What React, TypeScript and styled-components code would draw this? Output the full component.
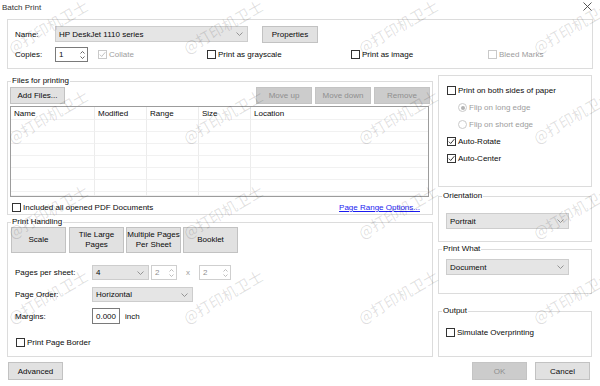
import React from "react";
import styled, { createGlobalStyle } from "styled-components";

const GlobalStyle = createGlobalStyle`
  html, body {
    margin: 0;
    padding: 0;
    background: #fff;
  }
`;

const Window = styled.div`
  position: relative;
  width: 600px;
  height: 386px;
  overflow: hidden;
  background: #fff;
  color: #0a0a0a;
  font-family: "Liberation Sans", Arial, sans-serif;
  font-size: 8px;
  line-height: 9px;
`;

const TitleBar = styled.div`
  box-sizing: border-box;
  height: 19px;
  display: flex;
  justify-content: space-between;
  align-items: flex-start;
  padding: 3px 8px 0 2px;
  color: #333;

  svg {
    margin-top: -1px;
  }
`;

const Body = styled.div`
  padding: 0 7px;
`;

const Box = styled.div<{ $h: number; $pad?: string }>`
  box-sizing: border-box;
  height: ${(p) => p.$h}px;
  border: 1px solid #dcdcdc;
  padding: ${(p) => p.$pad ?? "0"};
  display: flex;
  flex-direction: column;
`;

const Caption = styled.div<{ $mt?: number }>`
  position: relative;
  z-index: 1;
  align-self: flex-start;
  height: 10px;
  line-height: 10px;
  margin: ${(p) => p.$mt ?? 0}px 0 -5px 4px;
  padding: 0 1px;
  background: #fff;
`;

const Row = styled.div<{ $h: number; $mt?: number; $pl?: number; $pr?: number }>`
  display: flex;
  align-items: center;
  height: ${(p) => p.$h}px;
  margin-top: ${(p) => p.$mt ?? 0}px;
  padding-left: ${(p) => p.$pl ?? 0}px;
  padding-right: ${(p) => p.$pr ?? 0}px;
`;

const Label = styled.span<{ $w?: number; $muted?: boolean; $ml?: number }>`
  flex: none;
  width: ${(p) => (p.$w ? `${p.$w}px` : "auto")};
  margin-left: ${(p) => p.$ml ?? 0}px;
  color: ${(p) => (p.$muted ? "#9d9d9d" : "inherit")};
  white-space: nowrap;
`;

const Times = styled(Label)`
  text-align: center;
`;

const Cell = styled.div<{ $w: number; $ml?: number }>`
  flex: none;
  width: ${(p) => p.$w}px;
  margin-left: ${(p) => p.$ml ?? 0}px;
  display: flex;
  align-items: center;
`;

const Button = styled.button<{ $w: number; $h?: number; $off?: boolean; $ml?: number }>`
  box-sizing: border-box;
  flex: none;
  width: ${(p) => p.$w}px;
  height: ${(p) => p.$h ?? 17}px;
  margin: 0 0 0 ${(p) => p.$ml ?? 0}px;
  padding: 0;
  font: inherit;
  line-height: 9px;
  white-space: nowrap;
  background: ${(p) => (p.$off ? "#cccccc" : "#e1e1e1")};
  border: 1px solid ${(p) => (p.$off ? "#c4c4c4" : "#c2c2c2")};
  color: ${(p) => (p.$off ? "#8f8f8f" : "#0a0a0a")};
`;

const ModeButton = styled(Button)`
  line-height: 10px;
`;

const Combo = styled.div<{ $w: number; $h?: number; $ml?: number }>`
  box-sizing: border-box;
  flex: none;
  width: ${(p) => p.$w}px;
  height: ${(p) => p.$h ?? 16}px;
  margin-left: ${(p) => p.$ml ?? 0}px;
  display: flex;
  align-items: center;
  justify-content: space-between;
  padding: 0 4px 0 3px;
  background: #e5e5e5;
  border: 1px solid #cdcdcd;
`;

const Field = styled.div<{ $w: number; $h?: number; $off?: boolean; $ml?: number }>`
  box-sizing: border-box;
  flex: none;
  width: ${(p) => p.$w}px;
  height: ${(p) => p.$h ?? 15}px;
  margin-left: ${(p) => p.$ml ?? 0}px;
  display: flex;
  align-items: center;
  justify-content: space-between;
  padding: 0 2px 0 3px;
  background: #fff;
  border: 1px solid ${(p) => (p.$off ? "#cfcfcf" : "#7a7a7a")};
  color: ${(p) => (p.$off ? "#8f8f8f" : "#0a0a0a")};
`;

const Arrows = styled.span`
  display: flex;
  flex-direction: column;
  gap: 2px;
`;

const CheckLine = styled.label<{ $off?: boolean; $ml?: number }>`
  display: flex;
  align-items: center;
  gap: 2px;
  margin-left: ${(p) => p.$ml ?? 0}px;
  color: ${(p) => (p.$off ? "#9d9d9d" : "inherit")};
  white-space: nowrap;
`;

const Square = styled.span<{ $off?: boolean }>`
  box-sizing: border-box;
  flex: none;
  width: 9px;
  height: 9px;
  display: flex;
  align-items: center;
  justify-content: center;
  background: #fff;
  border: 1px solid ${(p) => (p.$off ? "#c9c9c9" : "#333")};
`;

const Round = styled.span<{ $on?: boolean }>`
  box-sizing: border-box;
  flex: none;
  width: 9px;
  height: 9px;
  border-radius: 50%;
  display: flex;
  align-items: center;
  justify-content: center;
  border: 1px solid #cacaca;

  &::after {
    content: "";
    width: 4px;
    height: 4px;
    border-radius: 50%;
    background: ${(p) => (p.$on ? "#b3b3b3" : "transparent")};
  }
`;

const LinkText = styled.span`
  margin-left: auto;
  color: #1b1bf0;
  text-decoration: underline;
`;

const Main = styled.div`
  display: flex;
  gap: 5px;
`;

const Column = styled.div<{ $w: number; $pt: number }>`
  width: ${(p) => p.$w}px;
  padding-top: ${(p) => p.$pt}px;
  display: flex;
  flex-direction: column;
`;

const Table = styled.div`
  box-sizing: border-box;
  height: 91px;
  margin-top: 2px;
  border: 1px solid #9c9c9c;
  display: grid;
  grid-template-columns: 84px 52px 52px 52px 1fr;
  grid-template-rows: 13px repeat(6, 12px) 1fr;
  overflow: hidden;
`;

const TCell = styled.div`
  border-right: 1px solid #ececec;
  border-bottom: 1px solid #f1f1f1;
  padding-left: 3px;
  display: flex;
  align-items: center;

  &:nth-child(5n) {
    border-right: none;
  }
`;

const Footer = styled.div`
  display: flex;
  align-items: center;
  padding: 5px 3px 0 1px;
`;

const Watermarks = styled.div`
  position: absolute;
  z-index: 2;
  top: 0;
  left: 13px;
  pointer-events: none;
  display: grid;
  grid-template-columns: repeat(4, 175px);
  grid-template-rows: 55px 90px 95px 85px;
`;

const Mark = styled.span`
  align-self: end;
  justify-self: start;
  transform: rotate(-30deg);
  transform-origin: 0 100%;
  font-family: "Noto Sans CJK SC", sans-serif;
  font-size: 15px;
  line-height: 15px;
  color: rgba(0, 0, 0, 0.12);
  white-space: nowrap;
`;

const Chevron = () => (
  <svg width="7" height="4" viewBox="0 0 7 4">
    <path d="M0.5 0.5 L3.5 3.5 L6.5 0.5" fill="none" stroke="#8a8a8a" strokeWidth="0.9" />
  </svg>
);

const SpinArrows = ({ off }: { off?: boolean }) => {
  const c = off ? "#b5b5b5" : "#555";
  return (
    <Arrows>
      <svg width="5" height="3" viewBox="0 0 5 3">
        <path d="M0.5 2.5 L2.5 0.5 L4.5 2.5" fill="none" stroke={c} strokeWidth="0.9" />
      </svg>
      <svg width="5" height="3" viewBox="0 0 5 3">
        <path d="M0.5 0.5 L2.5 2.5 L4.5 0.5" fill="none" stroke={c} strokeWidth="0.9" />
      </svg>
    </Arrows>
  );
};

type CheckProps = { label: string; checked?: boolean; off?: boolean; ml?: number };

const Check = ({ label, checked, off, ml }: CheckProps) => (
  <CheckLine $off={off} $ml={ml}>
    <Square $off={off}>
      {checked && (
        <svg width="7" height="7" viewBox="0 0 7 7">
          <path
            d="M0.8 3.6 L2.7 5.5 L6.3 1.2"
            fill="none"
            stroke={off ? "#bbb" : "#222"}
            strokeWidth="0.9"
          />
        </svg>
      )}
    </Square>
    {label}
  </CheckLine>
);

const Radio = ({ label, on }: { label: string; on?: boolean }) => (
  <CheckLine $off $ml={11}>
    <Round $on={on} />
    {label}
  </CheckLine>
);

const columns = ["Name", "Modified", "Range", "Size", "Location"];

export default function App(): React.ReactElement {
  const marks = Array.from({ length: 16 });

  return (
    <>
      <GlobalStyle />
      <Window>
        <TitleBar>
          <span>Batch Print</span>
          <svg width="9" height="9" viewBox="0 0 9 9">
            <path d="M0.5 0.5 L8.5 8.5 M8.5 0.5 L0.5 8.5" stroke="#444" strokeWidth="0.9" />
          </svg>
        </TitleBar>

        <Body>
          <Box $h={50} $pad="6px 0 0 7px">
            <Row $h={16}>
              <Label $w={40}>Name:</Label>
              <Combo $w={193}>
                <span>HP DeskJet 1110 series</span>
                <Chevron />
              </Combo>
              <Button $w={56} $h={17} $ml={14}>
                Properties
              </Button>
            </Row>
            <Row $h={15} $mt={5}>
              <Label $w={40}>Copies:</Label>
              <Field $w={33}>
                <span>1</span>
                <SpinArrows />
              </Field>
              <Cell $w={109} $ml={10}>
                <Check label="Collate" checked off />
              </Cell>
              <Cell $w={144}>
                <Check label="Print as grayscale" />
              </Cell>
              <Cell $w={137}>
                <Check label="Print as image" />
              </Cell>
              <Cell $w={90}>
                <Check label="Bleed Marks" off />
              </Cell>
            </Row>
          </Box>

          <Main>
            <Column $w={426} $pt={7}>
              <Caption>Files for printing</Caption>
              <Box $h={134} $pad="5px 3px 0 2px">
                <Row $h={17}>
                  <Button $w={55}>Add Files...</Button>
                  <Button $w={56} $off $ml={191}>
                    Move up
                  </Button>
                  <Button $w={56} $off $ml={3}>
                    Move down
                  </Button>
                  <Button $w={56} $off $ml={3}>
                    Remove
                  </Button>
                </Row>
                <Table>
                  {columns.map((c) => (
                    <TCell key={c}>{c}</TCell>
                  ))}
                  {Array.from({ length: 35 }).map((_, i) => (
                    <TCell key={i} />
                  ))}
                </Table>
                <Row $h={13} $mt={4} $pl={2} $pr={9}>
                  <Check label="Included all opened PDF Documents" />
                  <LinkText>Page Range Options...</LinkText>
                </Row>
              </Box>

              <Caption $mt={2}>Print Handling</Caption>
              <Box $h={135} $pad="4px 0 0 3px">
                <Row $h={26}>
                  <ModeButton $w={55} $h={26}>
                    Scale
                  </ModeButton>
                  <ModeButton $w={55} $h={26} $ml={3}>
                    Tile Large
                    <br />
                    Pages
                  </ModeButton>
                  <ModeButton $w={55} $h={26} $ml={2}>
                    Multiple Pages
                    <br />
                    Per Sheet
                  </ModeButton>
                  <ModeButton $w={55} $h={26} $ml={2}>
                    Booklet
                  </ModeButton>
                </Row>
                <Row $h={15} $mt={12} $pl={4}>
                  <Label $w={77}>Pages per sheet:</Label>
                  <Combo $w={57} $h={15}>
                    <span>4</span>
                    <Chevron />
                  </Combo>
                  <Field $w={26} $off $ml={2}>
                    <span>2</span>
                    <SpinArrows off />
                  </Field>
                  <Times $w={22} $muted>
                    x
                  </Times>
                  <Field $w={32} $off>
                    <span>2</span>
                    <SpinArrows off />
                  </Field>
                </Row>
                <Row $h={15} $mt={7} $pl={4}>
                  <Label $w={77}>Page Order:</Label>
                  <Combo $w={101} $h={15}>
                    <span>Horizontal</span>
                    <Chevron />
                  </Combo>
                </Row>
                <Row $h={16} $mt={6} $pl={4}>
                  <Label $w={77}>Margins:</Label>
                  <Field $w={28} $h={16}>
                    <span>0.000</span>
                  </Field>
                  <Label $ml={5}>inch</Label>
                </Row>
                <Row $h={13} $mt={12} $pl={5}>
                  <Check label="Print Page Border" />
                </Row>
              </Box>
            </Column>

            <Column $w={154} $pt={6}>
              <Box $h={112} $pad="6px 0 0 8px">
                <Row $h={17}>
                  <Check label="Print on both sides of paper" />
                </Row>
                <Row $h={17}>
                  <Radio label="Flip on long edge" on />
                </Row>
                <Row $h={17}>
                  <Radio label="Flip on short edge" />
                </Row>
                <Row $h={17}>
                  <Check label="Auto-Rotate" checked />
                </Row>
                <Row $h={17}>
                  <Check label="Auto-Center" checked />
                </Row>
              </Box>

              <Caption $mt={4}>Orientation</Caption>
              <Box $h={46} $pad="16px 0 0 7px">
                <Combo $w={123}>
                  <span>Portrait</span>
                  <Chevron />
                </Combo>
              </Box>

              <Caption $mt={2}>Print What</Caption>
              <Box $h={45} $pad="9px 0 0 7px">
                <Combo $w={123}>
                  <span>Document</span>
                  <Chevron />
                </Combo>
              </Box>

              <Caption $mt={12}>Output</Caption>
              <Box $h={46} $pad="14px 0 0 7px">
                <Row $h={13}>
                  <Check label="Simulate Overprinting" />
                </Row>
              </Box>
            </Column>
          </Main>

          <Footer>
            <Button $w={55} $h={18}>
              Advanced
            </Button>
            <Button $w={55} $h={18} $off $ml={409}>
              OK
            </Button>
            <Button $w={55} $h={18} $ml={8}>
              Cancel
            </Button>
          </Footer>
        </Body>

        <Watermarks>
          {marks.map((_, i) => (
            <Mark key={i}>@打印机卫士</Mark>
          ))}
        </Watermarks>
      </Window>
    </>
  );
}
